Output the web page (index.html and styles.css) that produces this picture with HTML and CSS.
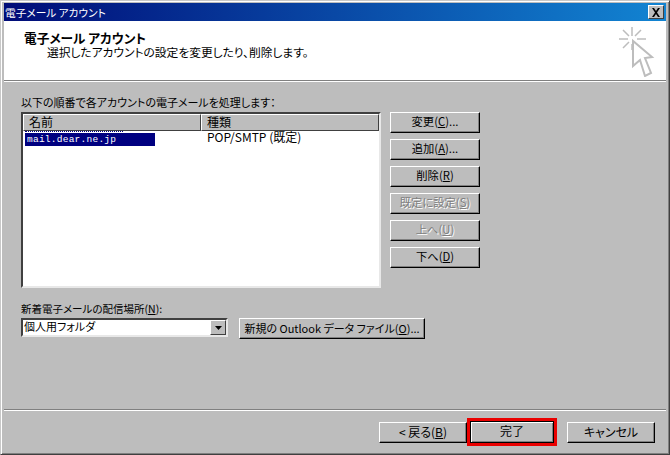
FILE: index.html
```html
<!DOCTYPE html>
<html lang="ja">
<head>
<meta charset="utf-8">
<title>電子メール アカウント</title>
<link rel="stylesheet" href="styles.css">
</head>
<body>
<div class="window">
  <div class="titlebar">
    <span class="title-text">電子メール アカウント</span>
    <button class="close" aria-label="閉じる">
      <svg width="10" height="9" viewBox="0 0 10 9"><path d="M1 0h2l2 3 2-3h2L6 4.500 9 9H7L5 6 3 9H1l3-4.500z" fill="#000"/></svg>
    </button>
  </div>
  <header class="header">
    <div class="header-text">
      <h1 class="heading">電子メール アカウント</h1>
      <p class="subheading">選択したアカウントの設定を変更したり、削除します。</p>
    </div>
    <svg class="wizard-icon" width="36" height="50" viewBox="0 0 36 50" fill="none">
      <g stroke="#bdbdbd" stroke-width="1.500">
        <path d="M13 0v9M0 12h9M18 12h9M4 3l6 6M22 3l-6 6M4 21l6-6M13 17v6"/>
        <path d="M14 14v25l7-6 5 16 6-3-6-15 7-1z" fill="#fff" stroke-width="2"/>
      </g>
    </svg>
  </header>
  <main class="content">
    <p class="label">以下の順番で各アカウントの電子メールを処理します：</p>
    <div class="account-row">
      <div class="listview">
        <div class="list-head">
          <div class="col col-name">名前</div>
          <div class="col col-type">種類</div>
        </div>
        <div class="list-row">
          <div class="cell-name"><span class="selected">mail.dear.ne.jp</span></div>
          <div class="cell-type">POP/SMTP (既定)</div>
        </div>
      </div>
      <div class="side-buttons">
        <button class="btn side">変更(<u>C</u>)...</button>
        <button class="btn side">追加(<u>A</u>)...</button>
        <button class="btn side">削除(<u>R</u>)</button>
        <button class="btn side disabled">既定に設定(<u>S</u>)</button>
        <button class="btn side disabled">上へ(<u>U</u>)</button>
        <button class="btn side">下へ(<u>D</u>)</button>
      </div>
    </div>
    <p class="label label-delivery">新着電子メールの配信場所(<u>N</u>):</p>
    <div class="delivery-row">
      <div class="combo">
        <span class="combo-value">個人用フォルダ</span>
        <span class="combo-arrow"><svg width="7" height="4" viewBox="0 0 7 4"><path d="M0 0h7L3.500 4z" fill="#000"/></svg></span>
      </div>
      <button class="btn new-file">新規の Outlook データ ファイル(<u>O</u>)...</button>
    </div>
  </main>
  <footer class="footer">
    <button class="btn wide back">&lt; 戻る(<u>B</u>)</button>
    <span class="highlight"><button class="btn default">完了</button></span>
    <button class="btn wide cancel">キャンセル</button>
  </footer>
</div>
</body>
</html>
```

FILE: styles.css
```css
* { box-sizing: border-box; }
html, body { margin: 0; padding: 0; }
body {
  width: 670px;
  height: 455px;
  overflow: hidden;
  background: #bdbdbd;
  font-family: "Noto Sans CJK JP", "Liberation Sans", sans-serif;
  font-size: 12px;
  font-feature-settings: "palt";
  color: #000;
}
.window {
  width: 670px;
  height: 455px;
  padding: 2px 3px 1px 3px;
  display: flex;
  flex-direction: column;
  background: #bdbdbd;
  border-top: 1px solid #c8c8c8;
  border-left: 1px solid #c8c8c8;
  border-right: 1px solid #404040;
  border-bottom: 1px solid #404040;
  box-shadow: inset 1px 1px 0 #fff, inset -1px -1px 0 #808080;
}
.titlebar {
  height: 18px;
  flex: none;
  display: flex;
  align-items: center;
  justify-content: space-between;
  padding: 0 2px 0 1px;
  background: linear-gradient(90deg, #000c78, #1284d2);
  color: #fff;
  font-size: 10.700px;
}
.title-text { line-height: 17px; height: 17px; }
.close {
  width: 16px;
  height: 14px;
  padding: 0;
  margin: 0;
  display: flex;
  align-items: center;
  justify-content: center;
  background: #bdbdbd;
  border: 1px solid;
  border-color: #fff #404040 #404040 #fff;
}
.header {
  height: 60px;
  flex: none;
  display: flex;
  justify-content: space-between;
  padding: 6px 11px 0 20px;
  background: #fff;
  border-bottom: 1px solid #808080;
}
.heading {
  margin: 4px 0 0;
  font-size: 12.700px;
  line-height: 13px;
  font-weight: 700;
}
.subheading {
  margin: 1px 0 0 23px;
  font-size: 11.750px;
  line-height: 13px;
}
.content {
  flex: 1;
  padding: 14px 0 0 17px;
  border-top: 1px solid #fff;
  display: flex;
  flex-direction: column;
}
.label {
  margin: 0;
  font-size: 11px;
  line-height: 13px;
  height: 16px;
  white-space: nowrap;
}
.account-row {
  display: flex;
  gap: 9px;
  align-items: flex-start;
}
.listview {
  width: 360px;
  height: 176px;
  background: #fff;
  border: 2px solid;
  border-color: #404040 #e8e8e8 #e8e8e8 #404040;
}
.list-head {
  display: flex;
  height: 17px;
}
.col {
  height: 17px;
  padding-left: 5px;
  line-height: 13px;
  font-size: 12px;
  background: #bdbdbd;
  border: 1px solid;
  border-color: #fff #404040 #404040 #fff;
}
.col-name { width: 178px; }
.col-type { flex: 1; }
.list-row {
  display: flex;
  height: 15px;
  font-size: 12px;
}
.cell-name {
  width: 178px;
  padding-left: 2px;
}
.cell-name::before {
  content: "";
  display: block;
  width: 98px;
  height: 1px;
  border-top: 1px dotted #000080;
}
.selected {
  display: block;
  width: 130px;
  height: 13px;
  padding-left: 2px;
  background: #000080;
  color: #fff;
  font-family: "Liberation Mono", monospace;
  font-size: 9.500px;
  line-height: 14px;
  letter-spacing: 0.250px;
}
.cell-type {
  padding-left: 6px;
  line-height: 12px;
  height: 12px;
  white-space: nowrap;
}
.side-buttons {
  display: flex;
  flex-direction: column;
  gap: 6px;
}
.btn {
  padding: 0 0 2px;
  margin: 0;
  font: inherit;
  font-size: 12px;
  line-height: 14px;
  white-space: nowrap;
  color: #000;
  background: #bdbdbd;
  border: 1px solid;
  border-color: #fff #000 #000 #fff;
  box-shadow: inset -1px -1px 0 #808080;
}
.side { width: 90px; height: 21px; font-size: 11.300px; padding-bottom: 3px; }
.disabled {
  color: #808080;
  text-shadow: 1px 1px 0 #fff;
}
.label-delivery { margin-top: 14px; font-size: 10.500px; }
.delivery-row {
  display: flex;
  align-items: flex-start;
  gap: 11px;
}
.combo {
  width: 207px;
  height: 19px;
  display: flex;
  justify-content: space-between;
  background: #fff;
  border: 2px solid;
  border-color: #404040 #e8e8e8 #e8e8e8 #404040;
  font-size: 11px;
}
.combo-value { line-height: 12px; padding-left: 1px; height: 15px; }
.combo-arrow {
  width: 16px;
  display: flex;
  align-items: center;
  justify-content: center;
  background: #bdbdbd;
  border: 1px solid;
  border-color: #fff #404040 #404040 #fff;
}
.new-file { width: 186px; height: 21px; font-size: 11px; }
.footer {
  height: 44px;
  flex: none;
  display: flex;
  align-items: flex-start;
  padding: 8px 0 0 375px;
  border-top: 1px solid #808080;
  box-shadow: inset 0 1px 0 #fff;
}
.wide { height: 21px; }
.back { width: 88px; margin-top: 4px; }
.highlight {
  display: block;
  padding: 3px;
  background: #ea0000;
}
.default {
  display: block;
  width: 84px;
  height: 22px;
  border-color: #000;
  box-shadow: inset 1px 1px 0 #fff, inset -1px -1px 0 #808080;
}
.cancel { width: 88px; margin: 4px 0 0 10px; }
```
